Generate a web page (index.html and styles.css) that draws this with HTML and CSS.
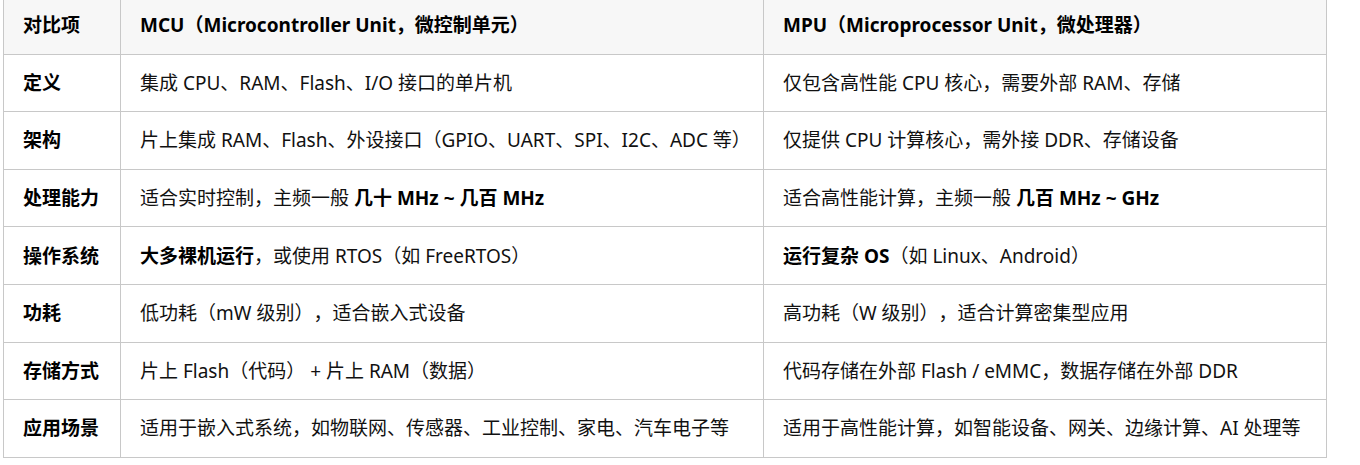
FILE: index.html
```html
<!DOCTYPE html>
<html lang="zh-CN">
<head>
<meta charset="utf-8">
<title>MCU vs MPU</title>
<link rel="stylesheet" href="styles.css">
</head>
<body>
<div class="wrap">
<table class="cmp">
  <colgroup>
    <col class="c1"><col class="c2"><col class="c3">
  </colgroup>
  <thead>
    <tr>
      <th>对比项</th>
      <th>MCU（Microcontroller Unit，微控制单元）</th>
      <th>MPU（Microprocessor Unit，微处理器）</th>
    </tr>
  </thead>
  <tbody>
    <tr><td class="k">定义</td><td>集成 CPU、RAM、Flash、I/O 接口的单片机</td><td>仅包含高性能 CPU 核心，需要外部 RAM、存储</td></tr>
    <tr><td class="k">架构</td><td>片上集成 RAM、Flash、外设接口（GPIO、UART、SPI、I2C、ADC 等）</td><td>仅提供 CPU 计算核心，需外接 DDR、存储设备</td></tr>
    <tr><td class="k">处理能力</td><td>适合实时控制，主频一般 <b>几十 MHz ~ 几百 MHz</b></td><td>适合高性能计算，主频一般 <b>几百 MHz ~ GHz</b></td></tr>
    <tr><td class="k">操作系统</td><td><b>大多裸机运行</b>，或使用 RTOS（如 FreeRTOS）</td><td><b>运行复杂 OS</b>（如 Linux、Android）</td></tr>
    <tr><td class="k">功耗</td><td>低功耗（mW 级别），适合嵌入式设备</td><td>高功耗（W 级别），适合计算密集型应用</td></tr>
    <tr><td class="k">存储方式</td><td>片上 Flash（代码） + 片上 RAM（数据）</td><td>代码存储在外部 Flash / eMMC，数据存储在外部 DDR</td></tr>
    <tr><td class="k">应用场景</td><td>适用于嵌入式系统，如物联网、传感器、工业控制、家电、汽车电子等</td><td>适用于高性能计算，如智能设备、网关、边缘计算、AI 处理等</td></tr>
  </tbody>
</table>
</div>
</body>
</html>
```
FILE: styles.css
```css
html, body {
  margin: 0;
  padding: 0;
  background: #fff;
}
body {
  font-family: "Noto Sans", "Noto Sans CJK SC", sans-serif;
  font-size: 19px;
  color: #111;
  text-spacing-trim: space-all;
}
.wrap {
  padding: 0 0 0 3px;
  margin-top: -4px;
}
.cmp {
  border-collapse: collapse;
  table-layout: fixed;
  width: 1323px;
}
.c1 { width: 117px; }
.c2 { width: 643px; }
.c3 { width: 563px; }
.cmp th, .cmp td {
  border: 1px solid #c8c8c8;
  padding: 14.3px 19px;
  height: 28px;
  line-height: 28px;
  text-align: left;
  white-space: nowrap;
}
.cmp th {
  background: #f7f7f7;
  font-weight: 700;
  color: #000;
}
.cmp td.k {
  font-weight: 700;
  color: #000;
}
.cmp b { font-weight: 700; color: #000; }
```
